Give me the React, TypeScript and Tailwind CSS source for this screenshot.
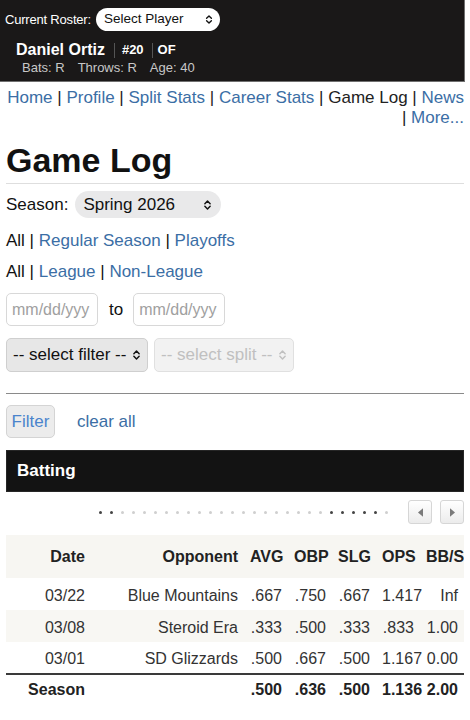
import React from 'react'

const font = { fontFamily: '"Liberation Sans", Arial, sans-serif' }

function UpDown({ className = '' }: { className?: string }) {
  return (
    <svg viewBox="0 0 10 16" className={className} fill="none" stroke="currentColor" strokeWidth="1.7" strokeLinecap="round" strokeLinejoin="round">
      <path d="M2 6.5 L5 3.5 L8 6.5" />
      <path d="M2 9.5 L5 12.5 L8 9.5" />
    </svg>
  )
}

type Row = { date: string; opp: string; stats: string[] }

const rows: Row[] = [
  { date: '03/22', opp: 'Blue Mountains', stats: ['.667', '.750', '.667', '1.417', 'Inf'] },
  { date: '03/08', opp: 'Steroid Era', stats: ['.333', '.500', '.333', '.833', '1.00'] },
  { date: '03/01', opp: 'SD Glizzards', stats: ['.500', '.667', '.500', '1.167', '0.00'] },
]

const statHeads = ['AVG', 'OBP', 'SLG', 'OPS', 'BB/SO']
const seasonStats = ['.500', '.636', '.500', '1.136', '2.00']

// which pager dots are dark
const darkDots = new Set([0, 1, 21, 22, 23, 24, 25])

export default function App() {
  return (
    <div className="min-h-[720px] bg-white text-[#111]" style={font}>
      {/* Player header */}
      <div className="w-[465px] h-[82px] bg-[#1a1818] border-r border-b border-[#707070] text-white">
        <div className="flex items-center pl-[5px] pt-[8px]">
          <span className="text-[13px] leading-[23px] tracking-[-0.2px]">Current Roster:</span>
          <div className="ml-[5px] flex items-center justify-between w-[124px] h-[23px] rounded-full bg-white text-[#111] pl-[8px] pr-[7px]">
            <span className="text-[13.5px]">Select Player</span>
            <UpDown className="w-[8px] h-[13px]" />
          </div>
        </div>
        <div className="flex items-center pl-[16px] mt-[9px] h-[20px]">
          <span className="text-[16px] font-bold">Daniel Ortiz</span>
          <span className="ml-[9px] w-px h-[15px] bg-[#555]" />
          <span className="ml-[7px] text-[13px] font-bold">#20</span>
          <span className="ml-[8px] w-px h-[15px] bg-[#555]" />
          <span className="ml-[5px] text-[13px] font-bold">OF</span>
        </div>
        <div className="flex gap-[13px] pl-[22px] h-[16px] items-center text-[13px] text-[#c8c8c8]">
          <span>Bats: R</span>
          <span>Throws: R</span>
          <span>Age: 40</span>
        </div>
      </div>

      <div className="px-[6px]">
        {/* Nav */}
        <div className="mt-[6px] text-right text-[17px] leading-[20px] text-[#222]">
          <a className="text-[#3b6ea5]">Home</a> | <a className="text-[#3b6ea5]">Profile</a> |{' '}
          <a className="text-[#3b6ea5]">Split Stats</a> | <a className="text-[#3b6ea5]">Career Stats</a> | Game Log |{' '}
          <a className="text-[#3b6ea5]">News</a> | <a className="text-[#3b6ea5]">More...</a>
        </div>

        <h1 className="mt-[12px] pb-[3px] border-b border-[#dedede] text-[34px] leading-[40px] font-bold">Game Log</h1>

        {/* Season */}
        <div className="mt-[7px] flex items-center text-[17px]">
          <span>Season:</span>
          <div className="ml-[7px] flex items-center justify-between w-[146px] h-[27px] rounded-full bg-[#e9e9ea] pl-[8px] pr-[9px]">
            <span>Spring 2026</span>
            <UpDown className="w-[9px] h-[14px]" />
          </div>
        </div>

        <div className="mt-[13px] text-[17px] leading-[20px]">
          All | <a className="text-[#3b6ea5]">Regular Season</a> | <a className="text-[#3b6ea5]">Playoffs</a>
        </div>
        <div className="mt-[11px] text-[17px] leading-[20px]">
          All | <a className="text-[#3b6ea5]">League</a> | <a className="text-[#3b6ea5]">Non-League</a>
        </div>

        {/* Date range */}
        <div className="mt-[11px] flex items-center text-[17px]">
          <div className="w-[92px] h-[33px] border border-[#d8d8d8] rounded-[5px] flex items-center pl-[5px] text-[16px] text-[#a0a0a0]">
            mm/dd/yyy
          </div>
          <span className="ml-[11px] mr-[10px]">to</span>
          <div className="w-[92px] h-[33px] border border-[#d8d8d8] rounded-[5px] flex items-center pl-[5px] text-[16px] text-[#a0a0a0]">
            mm/dd/yyy
          </div>
        </div>

        {/* Filter selects */}
        <div className="mt-[12px] flex gap-[6px] text-[17px]">
          <div className="w-[142px] h-[34px] rounded-[5px] border border-[#cfcfcf] bg-[#e7e7e7] flex items-center justify-between pl-[6px] pr-[6px]">
            <span>-- select filter --</span>
            <UpDown className="w-[9px] h-[14px]" />
          </div>
          <div className="w-[140px] h-[34px] rounded-[5px] border border-[#e0e0e0] bg-[#f2f2f2] flex items-center justify-between pl-[6px] pr-[6px] text-[#c0c0c0]">
            <span>-- select split --</span>
            <UpDown className="w-[9px] h-[14px]" />
          </div>
        </div>

        <div className="mt-[21px] border-t border-[#8a8a8a]" />

        {/* Filter button */}
        <div className="mt-[11px] flex items-center text-[17px]">
          <div className="w-[49px] h-[33px] rounded-[5px] border border-[#d4d4d4] bg-[#ececec] flex items-center justify-center text-[#4a84cc]">
            Filter
          </div>
          <a className="ml-[22px] text-[#3b6ea5]">clear all</a>
        </div>

        {/* Batting header */}
        <div className="mt-[12px] h-[42px] bg-[#131313] border border-[#262626] flex items-center pl-[10px] text-white text-[17px] font-bold">
          Batting
        </div>

        {/* Pager */}
        <div className="mt-[8px] h-[24px] flex items-center justify-end">
          <div className="flex">
            {Array.from({ length: 27 }).map((_, i) => (
              <div key={i} className="w-[11px] flex justify-center">
                <span className={`block w-[3px] h-[3px] rounded-full ${darkDots.has(i) ? 'bg-[#444]' : 'bg-[#cfcfcf]'}`} />
              </div>
            ))}
          </div>
          <div className="ml-[16px] flex gap-[8px]">
            <div className="w-[24px] h-[24px] rounded-[3px] border border-[#d6d6d6] bg-gradient-to-b from-white to-[#ececec] flex items-center justify-center">
              <svg viewBox="0 0 6 10" className="w-[5px] h-[9px]"><path d="M6 0 L0 5 L6 10 Z" fill="#7a7a7a" /></svg>
            </div>
            <div className="w-[24px] h-[24px] rounded-[3px] border border-[#d6d6d6] bg-gradient-to-b from-white to-[#ececec] flex items-center justify-center">
              <svg viewBox="0 0 6 10" className="w-[5px] h-[9px]"><path d="M0 0 L6 5 L0 10 Z" fill="#7a7a7a" /></svg>
            </div>
          </div>
        </div>

        {/* Table */}
        <div className="mt-[11px] w-[458px] overflow-hidden">
          <table className="table-fixed border-collapse w-[458px] text-[16px]">
            <colgroup>
              <col className="w-[85px]" />
              <col className="w-[153px]" />
              {statHeads.map((h) => (
                <col key={h} className="w-[44px]" />
              ))}
            </colgroup>
            <thead>
              <tr className="bg-[#f7f6f2] h-[43px]">
                <th className="text-right px-[6px] font-bold text-[#222]">Date</th>
                <th className="text-right px-[6px] font-bold text-[#222] whitespace-nowrap">Opponent</th>
                {statHeads.map((h) => (
                  <th key={h} className="text-right px-[6px] font-bold text-[#222] whitespace-nowrap">{h}</th>
                ))}
              </tr>
            </thead>
            <tbody>
              {rows.map((r, i) => (
                <tr key={r.date} className={`h-[32px] text-[#333] ${i === 1 ? 'bg-[#f8f7f3]' : ''}`}>
                  <td className="text-right px-[6px] pt-[3px]">{r.date}</td>
                  <td className="text-right px-[6px] pt-[3px] whitespace-nowrap">{r.opp}</td>
                  {r.stats.map((s, j) => (
                    <td key={j} className="text-right px-[6px] pt-[3px] whitespace-nowrap">{s}</td>
                  ))}
                </tr>
              ))}
              <tr className="h-[31px] border-t-2 border-[#3a3a3a] font-bold text-[#222]">
                <td className="text-right px-[6px]">Season</td>
                <td className="px-[6px]" />
                {seasonStats.map((s, j) => (
                  <td key={j} className="text-right px-[6px] whitespace-nowrap">{s}</td>
                ))}
              </tr>
            </tbody>
          </table>
        </div>
      </div>
    </div>
  )
}
